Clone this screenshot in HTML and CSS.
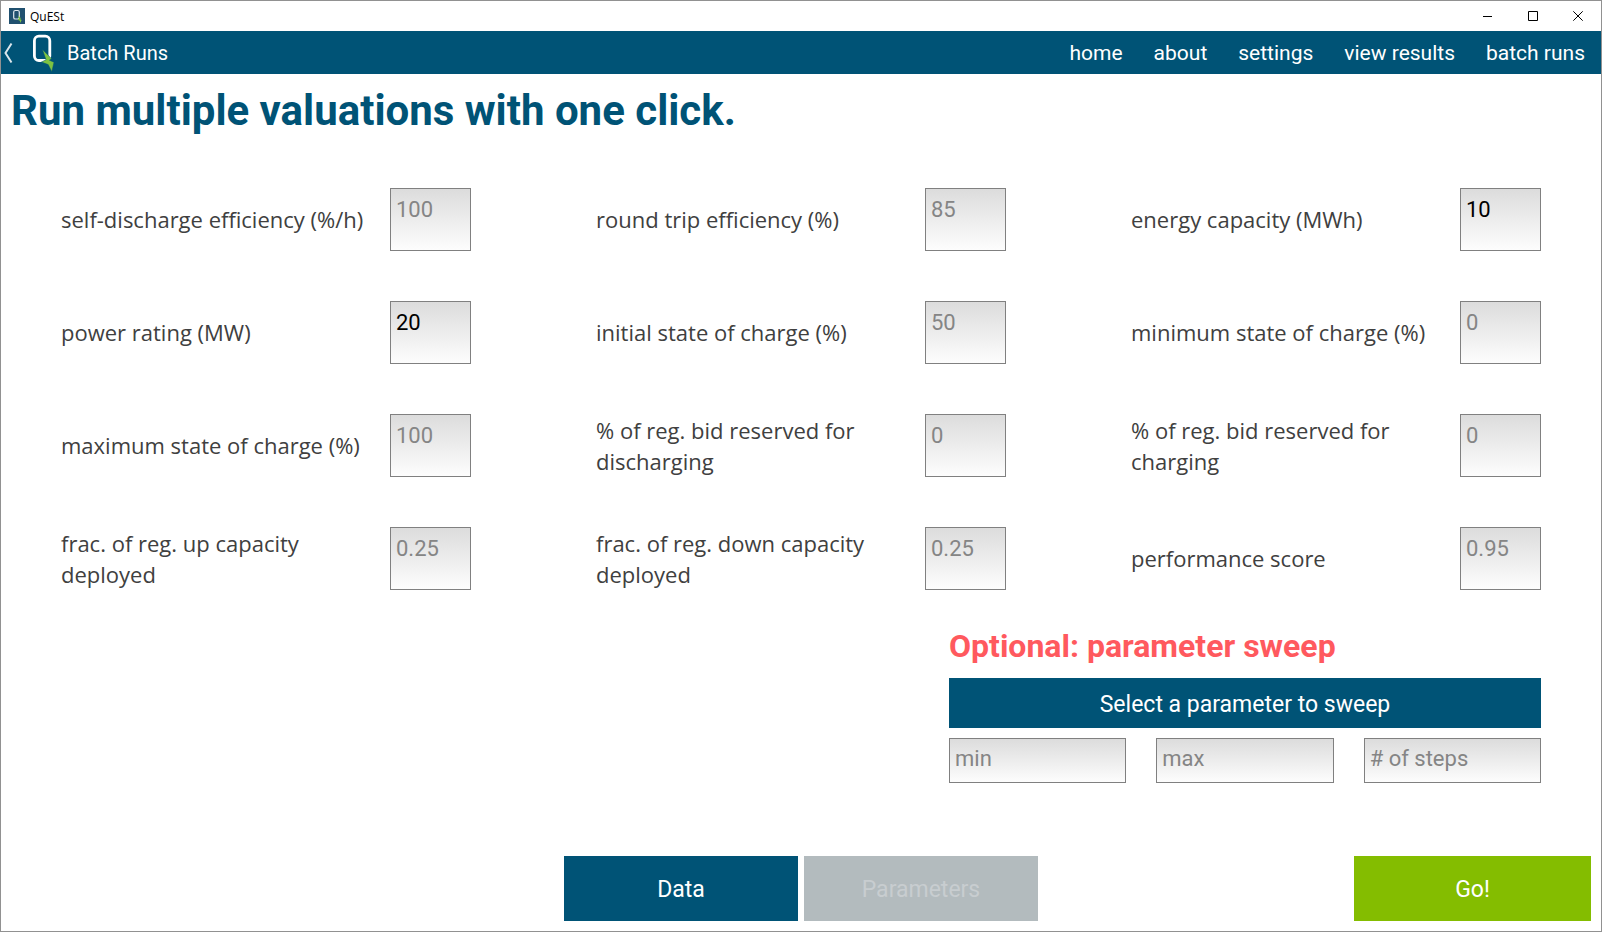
FILE: index.html
```html
<!DOCTYPE html>
<html lang="en">
<head>
<meta charset="utf-8">
<title>QuESt</title>
<link rel="stylesheet" href="styles.css">
</head>
<body>
<div class="window">
  <header class="titlebar">
    <svg class="app-icon" viewBox="0 0 16 16" aria-hidden="true">
      <rect width="16" height="16" fill="#20506f"/>
      <rect x="4.7" y="2.5" width="5.6" height="8.5" rx="1.6" fill="none" stroke="#dfe8ee" stroke-width="1.2"/>
      <path d="M9 7.5L12 10.3L11 10.9L12.6 12L11.4 15L10.8 12.8L8.6 11.8L10 10.8Z" fill="#7dc242"/>
    </svg>
    <span class="app-name">QuESt</span>
    <div class="window-controls">
      <button class="window-button" aria-label="Minimize"><svg viewBox="0 0 10 10"><path d="M0 5.5H9"/></svg></button>
      <button class="window-button" aria-label="Maximize"><svg viewBox="0 0 10 10"><path d="M.5 .5H9.5V9.5H.5Z"/></svg></button>
      <button class="window-button" aria-label="Close"><svg viewBox="0 0 10 10"><path d="M.3 .3L9.7 9.7M9.7 .3L.3 9.7"/></svg></button>
    </div>
  </header>
  <nav class="navbar">
    <a class="back" href="#" aria-label="Back">
      <svg class="chevron" viewBox="0 0 10 22"><path d="M8.5 1.5L2.5 11L8.5 20.5"/></svg>
      <svg class="logo" viewBox="0 0 22 38">
        <rect x="2.4" y="2.2" width="15.4" height="24.3" rx="4.5" fill="none" stroke="#fff" stroke-width="2.8"/>
        <path d="M10.4 15.5L19.6 24.8L17.4 26.2L22 28.2L19.8 37.8L16.2 30.6L9.4 28L14 25.8Z" fill="#7dc242" stroke="#005376" stroke-width=".5"/>
      </svg>
      <span>Batch Runs</span>
    </a>
    <div class="nav-links">
      <a href="#">home</a>
      <a href="#">about</a>
      <a href="#">settings</a>
      <a href="#">view results</a>
      <a href="#">batch runs</a>
    </div>
  </nav>
  <main class="content">
    <h1 class="page-title">Run multiple valuations with one click.</h1>
    <form class="parameters">
      <div class="field"><label for="p1">self-discharge efficiency (%/h)</label><input id="p1" placeholder="100"></div>
      <div class="field"><label for="p2">round trip efficiency (%)</label><input id="p2" placeholder="85"></div>
      <div class="field"><label for="p3">energy capacity (MWh)</label><input id="p3" value="10"></div>
      <div class="field"><label for="p4">power rating (MW)</label><input id="p4" value="20"></div>
      <div class="field"><label for="p5">initial state of charge (%)</label><input id="p5" placeholder="50"></div>
      <div class="field"><label for="p6">minimum state of charge (%)</label><input id="p6" placeholder="0"></div>
      <div class="field"><label for="p7">maximum state of charge (%)</label><input id="p7" placeholder="100"></div>
      <div class="field"><label for="p8">% of reg. bid reserved for discharging</label><input id="p8" placeholder="0"></div>
      <div class="field"><label for="p9">% of reg. bid reserved for charging</label><input id="p9" placeholder="0"></div>
      <div class="field"><label for="p10">frac. of reg. up capacity deployed</label><input id="p10" placeholder="0.25"></div>
      <div class="field"><label for="p11">frac. of reg. down capacity deployed</label><input id="p11" placeholder="0.25"></div>
      <div class="field"><label for="p12">performance score</label><input id="p12" placeholder="0.95"></div>
    </form>
    <section class="sweep">
      <h2 class="sweep-title">Optional: parameter sweep</h2>
      <button class="button sweep-select">Select a parameter to sweep</button>
      <div class="sweep-range">
        <input aria-label="Minimum" placeholder="min">
        <input aria-label="Maximum" placeholder="max">
        <input aria-label="Number of steps" placeholder="# of steps">
      </div>
    </section>
    <footer class="actions">
      <button class="button data">Data</button>
      <button class="button parameters-tab" disabled>Parameters</button>
      <button class="button go">Go!</button>
    </footer>
  </main>
</div>
</body>
</html>
```

FILE: styles.css
```css
* { box-sizing: border-box; }

body {
  margin: 0;
  background: #fff;
  font-family: Roboto, sans-serif;
  font-size: 22px;
}

.window {
  display: flex;
  flex-direction: column;
  min-height: 100vh;
  border: 1px solid #919191;
}

.titlebar {
  display: flex;
  align-items: center;
  height: 30px;
  padding-left: 8px;
}

.app-icon { width: 16px; height: 16px; }

.app-name {
  margin-left: 5px;
  font: 12px "Open Sans", sans-serif;
  color: #000;
}

.window-controls { display: flex; margin-left: auto; padding-right: 1px; }

.window-button {
  display: grid;
  place-items: center;
  width: 45px;
  height: 28px;
  padding: 0;
  border: 0;
  background: none;
}

.window-button svg {
  width: 10px;
  height: 10px;
  fill: none;
  stroke: #000;
  overflow: visible;
}

.navbar {
  display: flex;
  align-items: center;
  justify-content: space-between;
  height: 43px;
  padding: 0 16px 0 2px;
  background: #005376;
  font-size: 20px;
}

.navbar a { color: #fff; text-decoration: none; }

.back { display: flex; align-items: center; }

.chevron {
  width: 10px;
  height: 22px;
  fill: none;
  stroke: #dbe6ec;
  stroke-width: 2;
}

.logo { width: 22px; height: 38px; margin: 0 13px 0 19px; }

.nav-links { display: flex; gap: 31px; font-size: 21px; }

.content {
  display: flex;
  flex: 1;
  flex-direction: column;
  padding: 10px;
}

.page-title {
  margin: 0;
  font-size: 42px;
  line-height: 54px;
  color: #005376;
}

.parameters {
  display: grid;
  grid-template-columns: repeat(3, 1fr);
  gap: 50px 125px;
  margin: 50px 50px 0;
}

.field {
  display: flex;
  align-items: center;
  gap: 20px;
  height: 63px;
}

.field label {
  flex: 1;
  font-family: "Open Sans", sans-serif;
  font-size: 22px;
  line-height: 31px;
  color: #404040;
}

input {
  min-width: 0;
  border: 1px solid #808080;
  border-radius: 0;
  padding: 0 5px;
  background: linear-gradient(#dcdcdc, #fdfdfd);
  font: inherit;
  color: #000;
}

input::placeholder { color: #858585; opacity: 1; }

.field input { width: 81px; height: 63px; padding-bottom: 20px; }

.sweep {
  align-self: flex-end;
  width: 592px;
  margin: 36px 50px 0 0;
}

.sweep-title {
  margin: 0;
  font-size: 32px;
  line-height: 40px;
  color: #ff595e;
}

.button {
  border: 0;
  padding: 2px 0 0;
  font: inherit;
  font-size: 23px;
  color: #fff;
  background: #005376;
}

.sweep-select { width: 100%; height: 50px; margin-top: 12px; }

.sweep-range {
  display: grid;
  grid-template-columns: repeat(3, 1fr);
  gap: 30px;
  margin-top: 10px;
}

.sweep-range input { height: 45px; padding-bottom: 4px; }

.actions {
  display: grid;
  grid-template-columns: 1fr 234px 234px 1fr;
  gap: 6px;
  margin-top: auto;
}

.actions .button { height: 65px; }
.actions .data { grid-column: 2; }
.actions .parameters-tab { background: #b3bbbe; color: #c8cdd0; }
.actions .go { width: 237px; justify-self: end; background: #84bd00; }
```
